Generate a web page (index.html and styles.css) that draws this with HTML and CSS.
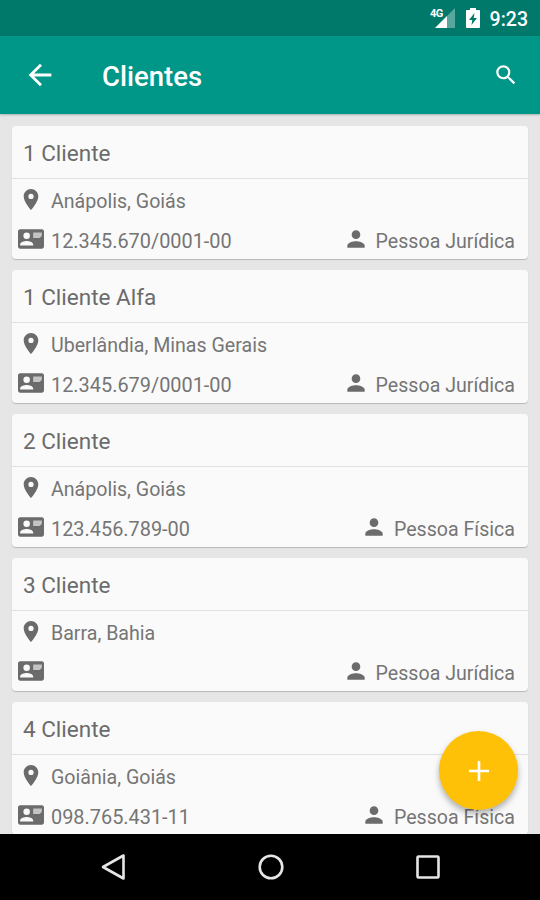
FILE: index.html
```html
<!DOCTYPE html>
<html lang="pt-BR">
<head>
    <meta charset="UTF-8">
    <meta name="viewport" content="width=device-width, initial-scale=1.0">
    <title>Clientes</title>
    <link rel="stylesheet" href="styles.css">
</head>
<body>

    <!-- Shared icons -->
    <svg class="sprite">
        <symbol id="pin" viewBox="0 0 24 24">
            <path d="M12 2C8.130 2 5 5.130 5 9c0 5.250 7 13 7 13s7-7.750 7-13c0-3.870-3.130-7-7-7zm0 9.500a2.500 2.500 0 0 1 0-5 2.500 2.500 0 0 1 0 5z"/>
        </symbol>
        <symbol id="card" viewBox="0 0 24 24">
            <path fill-rule="evenodd" d="M22 3H2C.9 3 0 3.900 0 5v14c0 1.100.9 2 2 2h20c1.100 0 2-.9 2-2V5c0-1.100-.9-2-2-2zM8 6a3 3 0 1 1 0 6 3 3 0 0 1 0-6zm6 12H2v-1c0-2 4-3.100 6-3.100s6 1.100 6 3.100v1z"/>
            <path class="card-lines" d="M14 6h8v3l-2 2h-6z"/>
        </symbol>
        <symbol id="person" viewBox="0 0 24 24">
            <path d="M12 12c2.210 0 4-1.790 4-4s-1.790-4-4-4-4 1.790-4 4 1.790 4 4 4zm0 2c-2.670 0-8 1.340-8 4v2h16v-2c0-2.660-5.330-4-8-4z"/>
        </symbol>
    </svg>

    <div class="status-bar">
        <svg class="signal" viewBox="0 0 26 22">
            <path class="signal-off" d="M25 1v20H5z"/>
            <path d="M17 9v12H5z"/>
            <text x="0" y="9.500">4G</text>
        </svg>
        <svg class="battery" viewBox="0 0 14 20">
            <path fill-rule="evenodd" d="M4 0h6v2h3q1 0 1 1v16q0 1-1 1H1q-1 0-1-1V3q0-1 1-1h3zM8.500 5L3 12h3.300L5.500 17 11 10H7.700z"/>
        </svg>
        <span class="clock">9:23</span>
    </div>

    <header class="app-bar">
        <svg class="back" viewBox="0 0 24 24"><path d="M20 11H7.830l5.590-5.590L12 4l-8 8 8 8 1.410-1.410L7.830 13H20v-2z"/></svg>
        <h1>Clientes</h1>
        <svg class="search" viewBox="0 0 24 24"><path d="M15.500 14h-.79l-.28-.27A6.470 6.470 0 0 0 16 9.500 6.500 6.500 0 1 0 9.500 16c1.610 0 3.090-.59 4.230-1.570l.27.28v.79l5 4.990L20.490 19l-4.990-5zm-6 0a4.500 4.500 0 1 1 0-9 4.500 4.500 0 0 1 0 9z"/></svg>
    </header>

    <main class="list">
        <div class="client">
            <h2>1 Cliente</h2>
            <div class="row city"><svg class="icon"><use href="#pin"/></svg><span>Anápolis, Goiás</span></div>
            <div class="row">
                <svg class="icon"><use href="#card"/></svg><span class="doc">12.345.670/0001-00</span>
                <div class="type"><svg class="icon"><use href="#person"/></svg><span>Pessoa Jurídica</span></div>
            </div>
        </div>

        <div class="client">
            <h2>1 Cliente Alfa</h2>
            <div class="row city"><svg class="icon"><use href="#pin"/></svg><span>Uberlândia, Minas Gerais</span></div>
            <div class="row">
                <svg class="icon"><use href="#card"/></svg><span class="doc">12.345.679/0001-00</span>
                <div class="type"><svg class="icon"><use href="#person"/></svg><span>Pessoa Jurídica</span></div>
            </div>
        </div>

        <div class="client">
            <h2>2 Cliente</h2>
            <div class="row city"><svg class="icon"><use href="#pin"/></svg><span>Anápolis, Goiás</span></div>
            <div class="row">
                <svg class="icon"><use href="#card"/></svg><span class="doc">123.456.789-00</span>
                <div class="type"><svg class="icon"><use href="#person"/></svg><span>Pessoa Física</span></div>
            </div>
        </div>

        <div class="client">
            <h2>3 Cliente</h2>
            <div class="row city"><svg class="icon"><use href="#pin"/></svg><span>Barra, Bahia</span></div>
            <div class="row">
                <svg class="icon"><use href="#card"/></svg>
                <div class="type"><svg class="icon"><use href="#person"/></svg><span>Pessoa Jurídica</span></div>
            </div>
        </div>

        <div class="client">
            <h2>4 Cliente</h2>
            <div class="row city"><svg class="icon"><use href="#pin"/></svg><span>Goiânia, Goiás</span></div>
            <div class="row">
                <svg class="icon"><use href="#card"/></svg><span class="doc">098.765.431-11</span>
                <div class="type"><svg class="icon"><use href="#person"/></svg><span>Pessoa Física</span></div>
            </div>
        </div>

        <button class="fab" aria-label="Adicionar">
            <svg viewBox="0 0 20 20"><path d="M8.700 0h2.600v8.700H20v2.600h-8.700V20H8.700v-8.700H0V8.700h8.700z"/></svg>
        </button>
    </main>

    <nav class="nav-bar">
        <svg viewBox="0 0 28 28"><path d="M23.500 2.500v23L3 14z"/></svg>
        <svg viewBox="0 0 28 28"><circle cx="14" cy="14" r="11.300"/></svg>
        <svg viewBox="0 0 28 28"><rect x="3.500" y="3.500" width="21" height="21" rx="1"/></svg>
    </nav>

</body>
</html>
```
FILE: styles.css
```css
* {
    box-sizing: border-box;
}

body {
    margin: 0;
    height: 900px;
    display: flex;
    flex-direction: column;
    overflow: hidden;
    background-color: #e6e6e6;
    font-family: Roboto, sans-serif;
    color: #757575;
}

.sprite {
    display: none;
}

/* Status bar */
.status-bar {
    height: 36px;
    flex: none;
    display: flex;
    align-items: center;
    justify-content: flex-end;
    padding-right: 12px;
    background-color: #00796b;
    color: white;
    fill: white;
}

.signal {
    width: 26px;
    height: 22px;
    margin-right: 10px;
}

.signal text {
    font-size: 11px;
    font-weight: 700;
    letter-spacing: -0.5px;
}

.signal-off {
    fill: #58a79d;
}

.battery {
    width: 14px;
    height: 20px;
    margin-right: 10px;
}

.clock {
    font-size: 19.500px;
    font-weight: 500;
    line-height: 36px;
    padding-top: 3px;
}

/* App bar */
.app-bar {
    height: 78px;
    flex: none;
    display: flex;
    align-items: center;
    padding: 0 21px 0 23px;
    background-color: #009688;
    box-shadow: 0 1px 2px rgba(0, 0, 0, 0.25);
    fill: white;
    z-index: 1;
}

.back {
    width: 34px;
    height: 34px;
}

h1 {
    flex: 1;
    margin: 2px 0 0 45px;
    font-size: 27.500px;
    font-weight: 500;
    color: white;
}

.search {
    width: 26px;
    height: 26px;
}

/* Client list */
.list {
    position: relative;
    flex: 1;
    min-height: 0;
    overflow: hidden;
    padding: 12px 12px 0;
}

.client {
    height: 133px;
    margin-bottom: 11px;
    border-radius: 4px;
    background-color: #fafafa;
    box-shadow: 0 1px 1px rgba(0, 0, 0, 0.2);
}

.client h2 {
    height: 53px;
    margin: 0;
    padding-left: 11px;
    border-bottom: 1px solid #e0e0e0;
    font-size: 22.500px;
    font-weight: 400;
    line-height: 55px;
    color: #6b6b6b;
}

.row {
    height: 36px;
    display: flex;
    align-items: center;
    gap: 7px;
    padding: 0 13px 0 6px;
    font-size: 19.600px;
}

.row span {
    padding-top: 2px;
}

.city {
    height: 43px;
}

.doc {
    font-size: 19.900px;
}

.icon {
    width: 26px;
    height: 26px;
    flex: none;
    margin-bottom: 2px;
    fill: #6b6b6b;
}

.city .icon {
    height: 25px;
}

.card-lines {
    fill: #c4c4c4;
}

.type {
    display: flex;
    align-items: center;
    gap: 7px;
    margin-left: auto;
}

.fab {
    position: absolute;
    right: 22px;
    bottom: 24px;
    width: 79px;
    height: 79px;
    display: flex;
    align-items: center;
    justify-content: center;
    border: none;
    border-radius: 50%;
    background-color: #ffc107;
    box-shadow: 0 4px 6px rgba(0, 0, 0, 0.3);
    fill: white;
}

.fab svg {
    width: 20px;
    height: 20px;
}

/* System navigation */
.nav-bar {
    height: 66px;
    flex: none;
    display: flex;
    justify-content: center;
    align-items: center;
    gap: 129px;
    padding-left: 1px;
    background-color: black;
}

.nav-bar svg {
    width: 28px;
    height: 28px;
    fill: none;
    stroke: #e6e6e6;
    stroke-width: 2.600;
    stroke-linejoin: round;
}
```
